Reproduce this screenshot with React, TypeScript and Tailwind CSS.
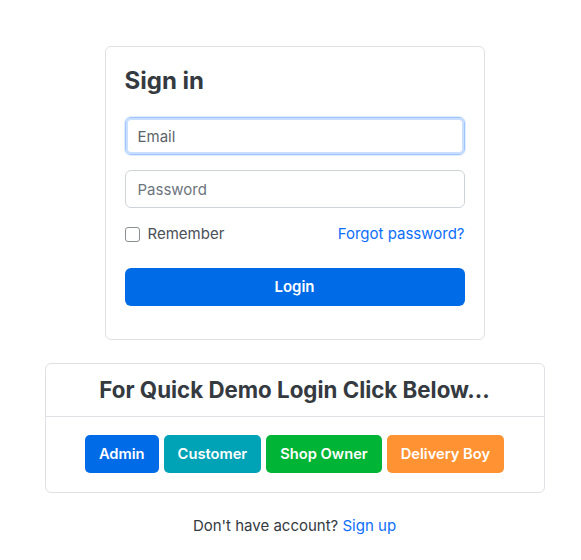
import React from "react";

export default function App() {
  return (
    <div
      className="min-h-[560px] w-full bg-white pl-[8px] text-[#495057]"
      style={{ fontFamily: "Inter, 'Liberation Sans', sans-serif" }}
    >
      <div className="flex flex-col items-center pt-[46px]">
        <div className="w-[380px] rounded-[6px] border border-[#dee2e6] px-[19px] pt-[19px] pb-[33px]">
          <h1 className="text-[24px] leading-[29px] font-bold text-[#343a40]">Sign in</h1>
          <input
            autoFocus
            placeholder="Email"
            className="mt-[22px] block h-[38px] w-full rounded-[6px] border border-[#9ec5fe] px-[12px] text-[15px] text-[#212529] placeholder-[#5c636a] shadow-[inset_0_0_0_2px_rgba(13,110,253,0.22),0_0_0_1px_rgba(13,110,253,0.12)] outline-none"
          />
          <input
            type="password"
            placeholder="Password"
            className="mt-[15px] block h-[38px] w-full rounded-[6px] border border-[#ced4da] px-[12px] text-[15px] text-[#212529] placeholder-[#6c757d] outline-none"
          />
          <div className="mt-[16px] flex h-[20px] items-center justify-between">
            <label className="flex items-center gap-[8px] text-[15px] text-[#495057]">
              <span className="block h-[15px] w-[15px] rounded-[3px] border border-[#8a8f94] bg-white" />
              Remember
            </label>
            <a className="text-[15px] text-[#0d6efd]">Forgot password?</a>
          </div>
          <button className="mt-[24px] block h-[38px] w-full rounded-[6px] bg-[#006be6] text-[15px] font-semibold text-white">
            Login
          </button>
        </div>

        <div className="mt-[23px] w-[500px] rounded-[6px] border border-[#dee2e6]">
          <div className="flex h-[53px] items-center justify-center border-b border-[#dee2e6]">
            <h2 className="text-[22.3px] font-bold text-[#343a40]">For Quick Demo Login Click Below...</h2>
          </div>
          <div className="flex justify-center gap-[5px] pt-[18px] pb-[19px]">
            <button className="h-[38px] rounded-[5px] bg-[#006be6] px-[14px] text-[14.7px] font-semibold text-white">Admin</button>
            <button className="h-[38px] rounded-[5px] bg-[#00a3b6] px-[14px] text-[14.7px] font-semibold text-white">Customer</button>
            <button className="h-[38px] rounded-[5px] bg-[#00b535] px-[14px] text-[14.7px] font-semibold text-white">Shop Owner</button>
            <button className="h-[38px] rounded-[5px] bg-[#ff9233] px-[14px] text-[14.7px] font-semibold text-white">Delivery Boy</button>
          </div>
        </div>

        <p className="mt-[22px] text-[15px] text-[#343a40]">
          Don't have account? <a className="text-[#0d6efd]">Sign up</a>
        </p>
      </div>
    </div>
  );
}
